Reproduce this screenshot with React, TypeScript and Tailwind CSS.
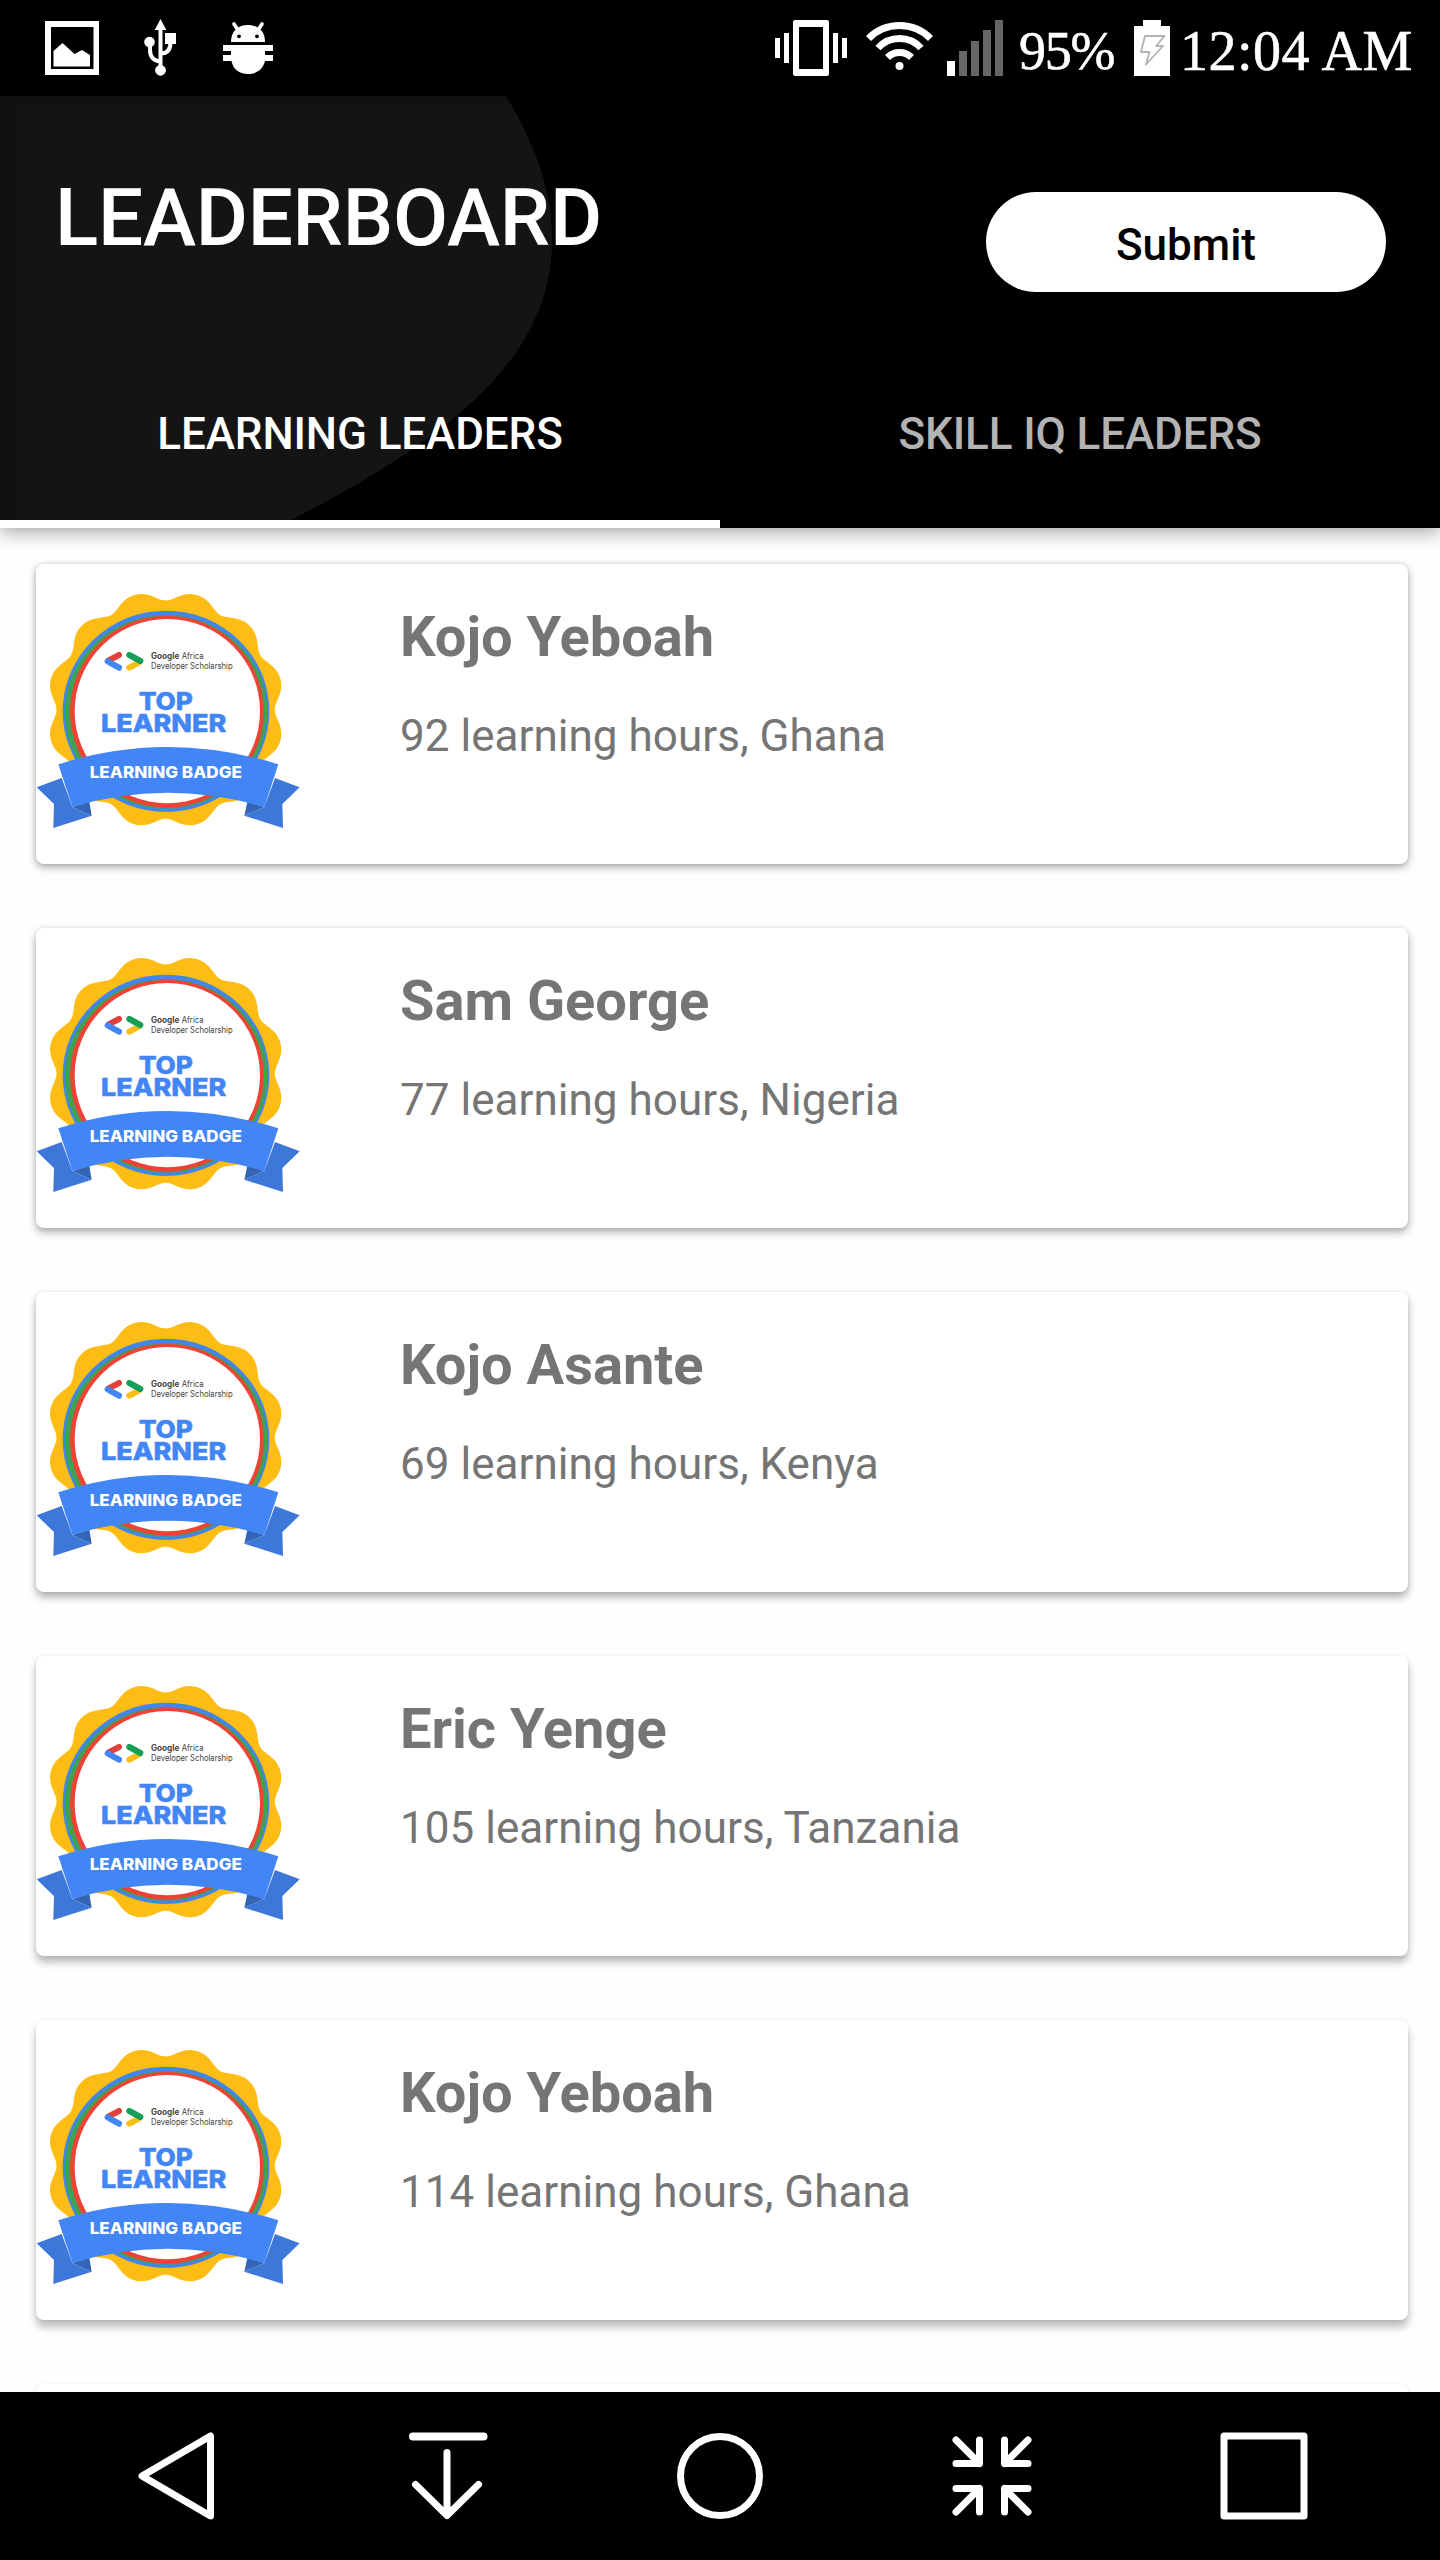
const leaders = [
  { name: "Kojo Yeboah", detail: "92 learning hours, Ghana", shadow: "shadow-[0_3px_9px_rgba(0,0,0,0.34),0_0_4px_rgba(0,0,0,0.08)]" },
  { name: "Sam George", detail: "77 learning hours, Nigeria", shadow: "shadow-[0_4px_9px_rgba(0,0,0,0.34),0_0_4px_rgba(0,0,0,0.07)]" },
  { name: "Kojo Asante", detail: "69 learning hours, Kenya", shadow: "shadow-[0_5px_9px_rgba(0,0,0,0.32),0_0_4px_rgba(0,0,0,0.06)]" },
  { name: "Eric Yenge", detail: "105 learning hours, Tanzania", shadow: "shadow-[0_6px_8px_rgba(0,0,0,0.29),0_0_4px_rgba(0,0,0,0.06)]" },
  { name: "Kojo Yeboah", detail: "114 learning hours, Ghana", shadow: "shadow-[0_7px_8px_rgba(0,0,0,0.27),0_0_4px_rgba(0,0,0,0.06)]" },
  { name: "", detail: "", shadow: "shadow-[0_8px_8px_rgba(0,0,0,0.24),0_0_4px_rgba(0,0,0,0.06)]" },
];

// Twelve-lobed rosette outline behind the badge rings.
const rosette =
  Array.from({ length: 181 }, (_, i) => {
    const a = (i * 2 * Math.PI) / 180;
    const r = 343.5 - 14.5 * Math.cos(12 * a) - 1.5 * Math.cos(24 * a);
    return `${i ? "L" : "M"}${(437 + r * Math.sin(a)).toFixed(1)} ${(479 - r * Math.cos(a)).toFixed(1)}`;
  }).join("") + "Z";

function Badge() {
  return (
    <svg className="h-[240px] w-[264px] shrink-0" viewBox="48 120 792 720" fontFamily="Inter, sans-serif">
      <path d={rosette} fill="#fdbd14" />
      <ellipse cx="438" cy="484" rx="310" ry="302" fill="#4384ee" />
      <ellipse cx="438.5" cy="485.5" rx="304" ry="290" fill="#3da352" />
      <ellipse cx="440.5" cy="485" rx="290.5" ry="288" fill="#ee4334" />
      <ellipse cx="442" cy="483.5" rx="278" ry="276.5" fill="#fff" />
      <g fill="none" strokeWidth="18" strokeLinecap="round">
        <path d="M297 315L266 331" stroke="#e24139" />
        <path d="M263 334L297 353" stroke="#4285f4" />
        <path d="M356 338L328 353" stroke="#fbbc14" />
        <path d="M328 315L361 333" stroke="#149e56" />
      </g>
      <g fill="#444" fontSize="25">
        <text x="393" y="326" fontWeight="700" textLength="85" lengthAdjust="spacingAndGlyphs">Google</text>
        <text x="485" y="326" textLength="66" lengthAdjust="spacingAndGlyphs">Africa</text>
        <text x="393" y="356" textLength="245" lengthAdjust="spacingAndGlyphs">Developer Scholarship</text>
      </g>
      <g fill="#4285f4" fontSize="75" fontWeight="800" stroke="#4285f4" strokeWidth="1.5">
        <text x="356" y="479" textLength="163" lengthAdjust="spacingAndGlyphs">TOP</text>
        <text x="243" y="547" textLength="376" lengthAdjust="spacingAndGlyphs">LEARNER</text>
      </g>
      <g fill="#3d77d8">
        <path d="M50 712L125 684L157 771L215 797L100 834L102 762Z" />
        <path d="M839 712L765 684L733 771L673 797L789 834L787 762Z" />
      </g>
      <path d="M157 771L208 755L215 797ZM733 771L682 755L673 797Z" fill="#3464b4" />
      <path d="M115 643Q440 539 775 643L733 771Q438 685 157 771Z" fill="#4285f4" />
      <text x="209" y="684" fill="#fff" fontSize="48" fontWeight="800" textLength="457" lengthAdjust="spacingAndGlyphs">
        LEARNING BADGE
      </text>
    </svg>
  );
}

function StatusBar() {
  return (
    <div className="flex h-24 shrink-0 items-center justify-between bg-black text-white">
      <svg className="h-24 w-[300px]" viewBox="0 0 300 96" fill="#fff">
        <path fillRule="evenodd" d="M45 21H99V75H45ZM51 27V69H93.500V27Z" />
        <path d="M53.500 51L62.500 43L74.500 54L82 50L90 55V66.500H53.500Z" />
        <path d="M160.500 19L166.300 30H154.700Z" />
        <path d="M160.500 28V70M150 42V50Q150 60 160 61.500M170.500 42Q170.500 53.500 161 53.500" fill="none" stroke="#fff" strokeWidth="4" />
        <circle cx="149.500" cy="42" r="5.300" />
        <circle cx="160.500" cy="70.300" r="5.400" />
        <path d="M165 33H176V44H165Z" />
        <path d="M231 42C231 31 238 25 248 25C258 25 265 31 265 42Z" />
        <path d="M234 24L238.500 31M262 24L257.500 31" stroke="#fff" strokeWidth="3.600" strokeLinecap="round" />
        <circle cx="239" cy="36.300" r="1.900" fill="#000" />
        <circle cx="257" cy="36.300" r="1.900" fill="#000" />
        <path d="M223 45H273V51H265V55H273V61H265C263 69 257 74 248 74C239 74 233 69 231.500 61H223V55H231V51H223Z" />
      </svg>
      <div className="flex h-24 items-center font-['Liberation_Serif',serif] [-webkit-text-stroke:0.6px_white]">
        <svg className="h-24 w-[240px]" viewBox="770 0 240 96" fill="#fff">
          <path d="M775 38h5v20h-5zM784 33h5v30h-5zM833 33h5v30h-5zM842 38h5v20h-5z" />
          <path fillRule="evenodd" d="M795 20H827Q829 20 829 22V74Q829 76 827 76H795Q793 76 793 74V22Q793 20 795 20ZM799 27V69H823V27Z" />
          <g fill="none" stroke="#fff" strokeWidth="7">
            <path d="M868.500 38.500A43.500 43.500 0 0 1 930.500 38.500" />
            <path d="M878 48A29 29 0 0 1 921 48" />
            <path d="M887.500 57.500A17 17 0 0 1 911.500 57.500" />
          </g>
          <circle cx="899.500" cy="66" r="4" />
          <path d="M947 61h8v15h-8z" />
          <path d="M959 51h8v25h-8zM971 41h8v35h-8zM983 30h8v46h-8zM995 20h8v56h-8z" fill="#666" />
        </svg>
        <span className="w-[124px] pl-[9px] pt-[6px] text-[54px] leading-[60px] tracking-[-1.200px]">95%</span>
        <svg className="h-24 w-9" viewBox="1134 0 36 96">
          <path d="M1134 26H1143V20H1161V26H1170V76H1134Z" fill="#fff" />
          <path d="M1145 36H1164.500L1156 46H1163L1146 64.500L1149.500 52H1141Z" fill="none" stroke="#b3b3b3" strokeWidth="1.800" strokeLinejoin="round" />
        </svg>
        <span className="w-[270px] whitespace-nowrap pl-[10px] pt-[6px] text-[56px] leading-[60px] tracking-[0.500px]">12:04 AM</span>
      </div>
    </div>
  );
}

function Header() {
  return (
    <header className="relative z-10 h-[432px] shrink-0 bg-black text-white shadow-[0_4px_18px_rgba(0,0,0,0.36)]">
      <svg className="absolute left-0 top-0 h-[432px] w-[720px]" viewBox="0 96 720 432">
        <path d="M0 96H506C535 143 552 190 552 240C552 355 455 436 291 520L276 528H0Z" fill="#101010" />
        <path d="M16 103H510C535 147 552 190 552 240C552 355 455 436 291 520L276 528H16Z" fill="#141414" />
      </svg>
      <div className="relative flex h-[292px] items-start justify-between pl-[55px] pr-[54px]">
        <h1 className="pt-[75px] text-[80px] font-medium leading-[94px] tracking-[-0.250px]">LEADERBOARD</h1>
        <button className="mt-24 h-[100px] w-[400px] rounded-full bg-white pt-[5px] text-[44px] font-medium text-black">
          Submit
        </button>
      </div>
      <nav className="relative grid h-[140px] grid-cols-2 text-[44px] font-medium tracking-[-0.100px]">
        <button className="flex justify-center border-b-8 border-white pt-[20px] leading-[52px]">LEARNING LEADERS</button>
        <button className="flex justify-center pt-[20px] leading-[52px] text-[#b3b3b3]">SKILL IQ LEADERS</button>
      </nav>
    </header>
  );
}

function NavBar() {
  return (
    <footer className="relative z-10 h-[168px] shrink-0 bg-black">
      <svg
        className="h-[168px] w-full"
        viewBox="0 2392 1440 168"
        fill="none"
        stroke="#fff"
        strokeWidth="7"
        strokeLinecap="round"
        strokeLinejoin="round"
      >
        <path d="M142 2476L210.500 2436V2516Z" />
        <path d="M413 2436.500H483.500" strokeWidth="8" />
        <path d="M447 2452.500V2515M415.500 2484.500L447 2515.500L478.500 2484.500" />
        <circle cx="720" cy="2476" r="39.500" />
        <path d="M979.500 2440V2463.500H956M956 2440L979.500 2463.500M1004.500 2440V2463.500H1028M1028 2440L1004.500 2463.500" />
        <path d="M979.500 2512V2488.500H956M956 2512L979.500 2488.500M1004.500 2512V2488.500H1028M1028 2512L1004.500 2488.500" />
        <rect x="1224" y="2436" width="80" height="80" />
      </svg>
    </footer>
  );
}

export default function App() {
  return (
    <div className="flex h-[2560px] w-[1440px] flex-col overflow-hidden bg-[#fefefe] font-[Roboto,sans-serif]">
      <StatusBar />
      <Header />
      <main className="flex min-h-0 flex-1 flex-col gap-16 overflow-hidden pl-9 pr-8 pt-9">
        {leaders.map((leader, i) => (
          <article key={i} className={`flex h-[300px] shrink-0 rounded-[8px] bg-white pt-[26px] text-[#757575] ${leader.shadow}`}>
            {leader.name && (
              <>
                <Badge />
                <div className="pl-[100px] pt-[14px]">
                  <h2 className="text-[56px] font-bold leading-[66px]">{leader.name}</h2>
                  <p className="mt-[40px] text-[44px] leading-[52px] tracking-[0.030px]">{leader.detail}</p>
                </div>
              </>
            )}
          </article>
        ))}
      </main>
      <NavBar />
    </div>
  );
}
